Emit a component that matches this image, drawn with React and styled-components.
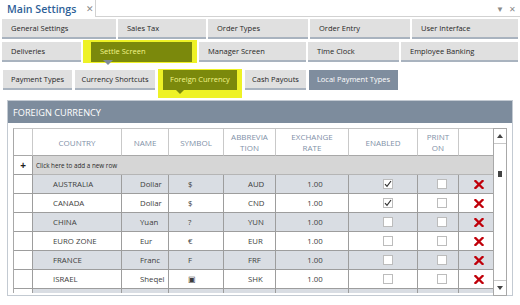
import React from "react";
import styled, { createGlobalStyle, css } from "styled-components";

const GlobalStyle = createGlobalStyle`
  html, body { margin: 0; padding: 0; background: #fff; }
  body { font-family: "Open Sans", "Noto Sans", sans-serif; color: #333; }
  * { box-sizing: border-box; }
`;

const Window = styled.div`
  width: 520px;
  height: 305px;
  overflow: hidden;
  display: flex;
  flex-direction: column;
  background: #fff;
`;

const TitleBar = styled.div`
  display: flex;
  height: 17px;
`;

const Tab = styled.div`
  width: 96px;
  display: flex;
  align-items: center;
  gap: 10px;
  padding-left: 7px;
  border-right: 1px solid #d2d2d2;
`;

const TabTitle = styled.span`
  font-size: 10.6px;
  font-weight: 600;
  color: #2e5f98;
`;

const TabClose = styled.span`
  font-size: 9px;
  color: #8a8a8a;
`;

const TitleFill = styled.div`
  flex: 1;
  border-bottom: 1px solid #d2d2d2;
  display: flex;
  justify-content: flex-end;
  align-items: center;
  gap: 5px;
  padding-right: 4px;
  color: #8a8a8a;
  font-size: 8px;
`;

const ButtonRow = styled.div`
  display: flex;
  gap: ${(p) => p.$gap || 2}px;
  padding-left: ${(p) => p.$indent || 2}px;
  margin-top: ${(p) => p.$top}px;
  height: 20px;
`;

const NavButton = styled.div`
  position: relative;
  flex: none;
  width: ${(p) => p.$w}px;
  height: 20px;
  display: flex;
  align-items: center;
  justify-content: ${(p) => (p.$center ? "center" : "flex-start")};
  padding-left: ${(p) => (p.$center ? 0 : 9)}px;
  font-size: 7.5px;
  white-space: nowrap;
  background: #e0e0e0;
  color: #262626;
  border-bottom: 2px solid #a9b3bf;
  ${(p) =>
    p.$variant === "active" &&
    css`
      background: #7b890c;
      color: #f2f58a;
      border-bottom-color: #7b890c;
    `}
  ${(p) =>
    p.$variant === "slate" &&
    css`
      background: #7f8d9e;
      color: #fff;
      border-bottom-color: #7f8d9e;
    `}
`;

const Pointer = styled.span`
  position: absolute;
  top: 100%;
  left: ${(p) => p.$left}px;
  width: 0;
  height: 0;
  border-left: ${(p) => p.$size}px solid transparent;
  border-right: ${(p) => p.$size}px solid transparent;
  border-top: ${(p) => p.$size}px solid ${(p) => p.$color};
`;

const Highlight = styled.div`
  flex: none;
  display: flex;
  align-items: flex-start;
  background: #eef226;
  padding: ${(p) => p.$pad};
  margin: ${(p) => p.$margin};
`;

const Panel = styled.div`
  margin: 10px 7px 0 7px;
  border: 1px solid #c3cad2;
  height: 196px;
  display: flex;
  flex-direction: column;
`;

const PanelHeader = styled.div`
  height: 22px;
  flex: none;
  background: #7d8c9d;
  color: #fff;
  font-size: 9.2px;
  display: flex;
  align-items: center;
  padding-left: 5px;
`;

const PanelBody = styled.div`
  flex: 1;
  display: flex;
  padding: 5px 5px 3px 5px;
  min-height: 0;
`;

const GridArea = styled.div`
  flex: none;
  width: 480px;
  height: 165px;
  overflow: hidden;
  border-left: 1px solid #a8a8a8;
  border-top: 1px solid #c4c4c4;
`;

const Grid = styled.div`
  display: grid;
  grid-template-columns: 19px 89px 47px 55px 52px 73px 69px 41px 35px;
  grid-auto-rows: 19px;
  grid-template-rows: 27px;
`;

const HeadCell = styled.div`
  display: flex;
  align-items: center;
  justify-content: center;
  text-align: center;
  font-size: 8px;
  line-height: 11px;
  color: #7f91a8;
  border-right: 1px solid #c9c9c9;
  border-bottom: 1px solid #a8a8a8;
`;

const Cell = styled.div`
  display: flex;
  align-items: center;
  justify-content: ${(p) => (p.$center ? "center" : "flex-start")};
  padding-left: ${(p) => p.$pad || 0}px;
  font-size: 7.8px;
  color: #3d3d3d;
  white-space: nowrap;
  background: ${(p) => (p.$shade ? "#d9dde3" : "#fff")};
  border-right: 1px solid #9d9d9d;
  border-bottom: 1px solid #9d9d9d;
`;

const IndicatorCell = styled(Cell)`
  background: #fff;
  justify-content: center;
  font-size: 10px;
  font-weight: 700;
  color: #222;
`;

const AddRowCell = styled(Cell)`
  grid-column: span 8;
  background: #d6d6d6;
  font-size: 6.3px;
  color: #2a2a2a;
  padding-left: 3px;
  border-bottom-color: #b5b5b5;
`;

const CheckBox = styled.span`
  width: 10px;
  height: 10px;
  border: 1px solid #bcbcbc;
  background: #fff;
  display: flex;
  align-items: center;
  justify-content: center;
`;

const ScrollBar = styled.div`
  flex: none;
  width: 14px;
  height: 168px;
  border: 1px solid #a8a8a8;
  display: flex;
  flex-direction: column;
  background: #fff;
`;

const ScrollButton = styled.div`
  height: 15px;
  display: flex;
  align-items: center;
  justify-content: center;
  ${(p) => (p.$bottom ? "border-top" : "border-bottom")}: 1px solid #c8c8c8;
`;

const Track = styled.div`
  flex: 1;
  display: flex;
  justify-content: center;
  padding-top: 27px;
`;

const Thumb = styled.span`
  width: 4px;
  height: 6px;
  background: #444;
`;

const Tick = () => (
  <svg width="8" height="8" viewBox="0 0 8 8">
    <path d="M1 4.2 L3 6.4 L7 1" fill="none" stroke="#333" strokeWidth="1.2" />
  </svg>
);

const RedX = () => (
  <svg width="10" height="9" viewBox="0 0 10 9">
    <path d="M1.5 1 L8.5 8 M8.5 1 L1.5 8" stroke="#c0000a" strokeWidth="2.3" strokeLinecap="square" />
  </svg>
);

const Arrow = ({ down }) => (
  <svg width="6" height="4" viewBox="0 0 6 4">
    <path d={down ? "M0 0 L6 0 L3 4 Z" : "M0 4 L6 4 L3 0 Z"} fill="#444" />
  </svg>
);

const currencies = [
  ["AUSTRALIA", "Dollar", "$", "AUD", "1.00", true],
  ["CANADA", "Dollar", "$", "CND", "1.00", true],
  ["CHINA", "Yuan", "?", "YUN", "1.00", false],
  ["EURO ZONE", "Eur", "€", "EUR", "1.00", false],
  ["FRANCE", "Franc", "F", "FRF", "1.00", false],
  ["ISRAEL", "Sheqel", "▣", "SHK", "1.00", false],
  ["JAPAN", "Yen", "円", "YEN", "1.00", false],
];

export default function App() {
  return (
    <Window>
      <GlobalStyle />
      <TitleBar>
        <Tab>
          <TabTitle>Main Settings</TabTitle>
          <TabClose>✕</TabClose>
        </Tab>
        <TitleFill>
          <span>▼</span>
          <span>✕</span>
        </TitleFill>
      </TitleBar>

      <ButtonRow $top={2}>
        <NavButton $w={114}>General Settings</NavButton>
        <NavButton $w={88}>Sales Tax</NavButton>
        <NavButton $w={100}>Order Types</NavButton>
        <NavButton $w={100}>Order Entry</NavButton>
        <NavButton $w={106}>User Interface</NavButton>
      </ButtonRow>

      <ButtonRow $top={3}>
        <NavButton $w={79}>Deliveries</NavButton>
        <Highlight $pad="2px 5px 1px 8px" $margin="-2px 0 -1px 0">
          <NavButton $w={101} $variant="active">
            Settle Screen
            <Pointer $left={12} $size={5} $color="#7f8b98" />
          </NavButton>
        </Highlight>
        <NavButton $w={107}>Manager Screen</NavButton>
        <NavButton $w={91}>Time Clock</NavButton>
        <NavButton $w={117}>Employee Banking</NavButton>
      </ButtonRow>

      <ButtonRow $top={8} $gap={3} $indent={3}>
        <NavButton $w={69} $center>Payment Types</NavButton>
        <NavButton $w={80} $center>Currency Shortcuts</NavButton>
        <Highlight $pad="1px 5px 8px 5px" $margin="-1px 0 -8px 0">
          <NavButton $w={74} $center $variant="active">
            Foreign Currency
            <Pointer $left={11} $size={6} $color="#7b890c" />
          </NavButton>
        </Highlight>
        <NavButton $w={61} $center>Cash Payouts</NavButton>
        <NavButton $w={89} $center $variant="slate">Local Payment Types</NavButton>
      </ButtonRow>

      <Panel>
        <PanelHeader>FOREIGN CURRENCY</PanelHeader>
        <PanelBody>
          <GridArea>
            <Grid>
              <HeadCell />
              <HeadCell>COUNTRY</HeadCell>
              <HeadCell>NAME</HeadCell>
              <HeadCell>SYMBOL</HeadCell>
              <HeadCell>ABBREVIA<br />TION</HeadCell>
              <HeadCell>EXCHANGE<br />RATE</HeadCell>
              <HeadCell>ENABLED</HeadCell>
              <HeadCell>PRINT<br />ON</HeadCell>
              <HeadCell />

              <IndicatorCell>+</IndicatorCell>
              <AddRowCell>Click here to add a new row</AddRowCell>

              {currencies.map(([country, name, symbol, abbr, rate, enabled], i) => {
                const shade = i % 2 === 0;
                return (
                  <React.Fragment key={country}>
                    <IndicatorCell />
                    <Cell $shade={shade} $pad={20}>{country}</Cell>
                    <Cell $shade={shade} $pad={18}>{name}</Cell>
                    <Cell $shade={shade} $pad={19}>{symbol}</Cell>
                    <Cell $shade={shade} $pad={24}>{abbr}</Cell>
                    <Cell $shade={shade} $pad={6} $center>{rate}</Cell>
                    <Cell $shade={shade} $pad={10} $center>
                      <CheckBox>{enabled && <Tick />}</CheckBox>
                    </Cell>
                    <Cell $shade={shade} $pad={8} $center>
                      <CheckBox />
                    </Cell>
                    <Cell $shade={shade} $pad={5} $center>
                      <RedX />
                    </Cell>
                  </React.Fragment>
                );
              })}
            </Grid>
          </GridArea>
          <ScrollBar>
            <ScrollButton>
              <Arrow />
            </ScrollButton>
            <Track>
              <Thumb />
            </Track>
            <ScrollButton $bottom>
              <Arrow down />
            </ScrollButton>
          </ScrollBar>
        </PanelBody>
      </Panel>
    </Window>
  );
}
